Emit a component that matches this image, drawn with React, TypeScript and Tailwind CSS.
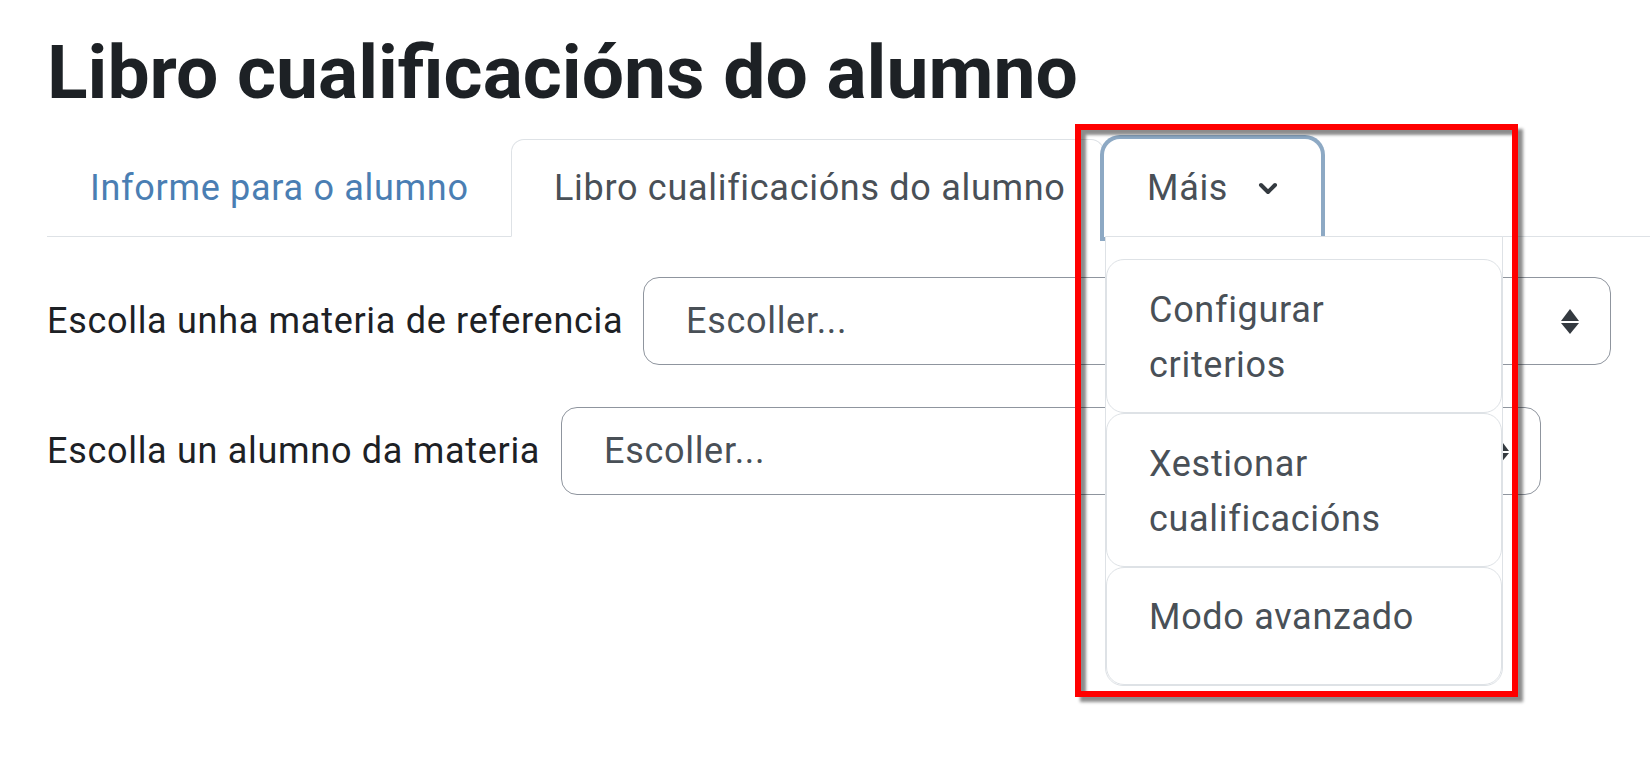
import React from 'react';

// Moodle-ish grader page, zoomed in, with the "Máis" dropdown open and a red callout box

function Chevron() {
  return (
    <svg width="20" height="13" viewBox="0 0 20 13" className="ml-[30px] shrink-0">
      <polyline
        points="3,3 10,10 17,3"
        fill="none"
        stroke="#343a40"
        strokeWidth="4"
        strokeLinecap="round"
        strokeLinejoin="round"
      />
    </svg>
  );
}

function UpDown() {
  return (
    <svg width="18" height="25" viewBox="0 0 18 25" className="shrink-0">
      <path d="M9 0L0 12h18z" fill="#343a40" />
      <path d="M9 25L0 14h18z" fill="#343a40" />
    </svg>
  );
}

interface SelectProps {
  className: string;
}

function FakeSelect({ className }: SelectProps) {
  return (
    <div
      className={`flex h-[88px] items-center justify-between rounded-[16px] border-[1.5px] border-[#8f959e] pl-[42px] pr-[31px] text-[#495057] ${className}`}
    >
      <span>Escoller...</span>
      <UpDown />
    </div>
  );
}

const menuItems = [
  { lines: ['Configurar', 'criterios'], pad: 'pt-[23px] pb-[19px]' },
  { lines: ['Xestionar', 'cualificacións'], pad: 'pt-[23px] pb-[19px]' },
  { lines: ['Modo avanzado'], pad: 'pt-[22px] pb-[39px]' },
];

export default function App() {
  return (
    <div className="relative min-h-screen bg-white pl-[47px] pt-[28px] font-['Roboto',sans-serif] text-[36px] tracking-[0.7px]">
      <h2 className="text-[75px] font-bold leading-[89px] tracking-normal text-[#1d2125]">
        Libro cualificacións do alumno
      </h2>

      {/* Tabs */}
      <ul className="mt-[22px] flex border-b border-[#dee2e6] whitespace-nowrap">
        <li className="-mb-px">
          <a className="block w-[464px] rounded-t-[13px] border border-transparent px-[42px] py-[21px] leading-[54px] text-[#4a7eb3]">
            Informe para o alumno
          </a>
        </li>
        <li className="-mb-px">
          <a className="block w-[593px] rounded-t-[13px] border border-[#dee2e6] border-b-white bg-white px-[42px] py-[21px] leading-[54px] text-[#495057]">
            Libro cualificacións do alumno
          </a>
        </li>
        <li className="-mb-px">
          <a className="flex w-[217px] items-center rounded-t-[16px] border border-transparent bg-white px-[42px] py-[21px] leading-[54px] text-[#495057] shadow-[0_0_0_4px_#8da9c4]">
            <span>Máis</span>
            <Chevron />
          </a>
        </li>
      </ul>

      {/* Form rows */}
      <div className="mt-[40px] flex items-center">
        <label className="w-[596px] leading-[54px] text-[#1d2125]">Escolla unha materia de referencia</label>
        <FakeSelect className="w-[968px]" />
      </div>
      <div className="mt-[42px] flex items-center">
        <label className="w-[514px] leading-[54px] text-[#1d2125]">Escolla un alumno da materia</label>
        <FakeSelect className="w-[980px]" />
      </div>

      {/* Open dropdown menu */}
      <div className="absolute left-[1105px] top-[236px] z-10 w-[398px] rounded-b-[18px] border border-[#dee2e6] bg-white pt-[22px]">
        {menuItems.map((item) => (
          <div
            key={item.lines.join(' ')}
            className={`rounded-[18px] border border-[#dee2e6] px-[42px] leading-[55px] text-[#495057] ${item.pad}`}
          >
            {item.lines.map((line) => (
              <div key={line}>{line}</div>
            ))}
          </div>
        ))}
      </div>

      {/* Red highlight box */}
      <div className="pointer-events-none absolute left-[1075px] top-[124px] z-20 h-[573px] w-[443px] border-[6px] border-[#ff0000] shadow-[5px_5px_3px_rgba(0,0,0,0.45),inset_5px_5px_3px_rgba(0,0,0,0.45)]" />
    </div>
  );
}
